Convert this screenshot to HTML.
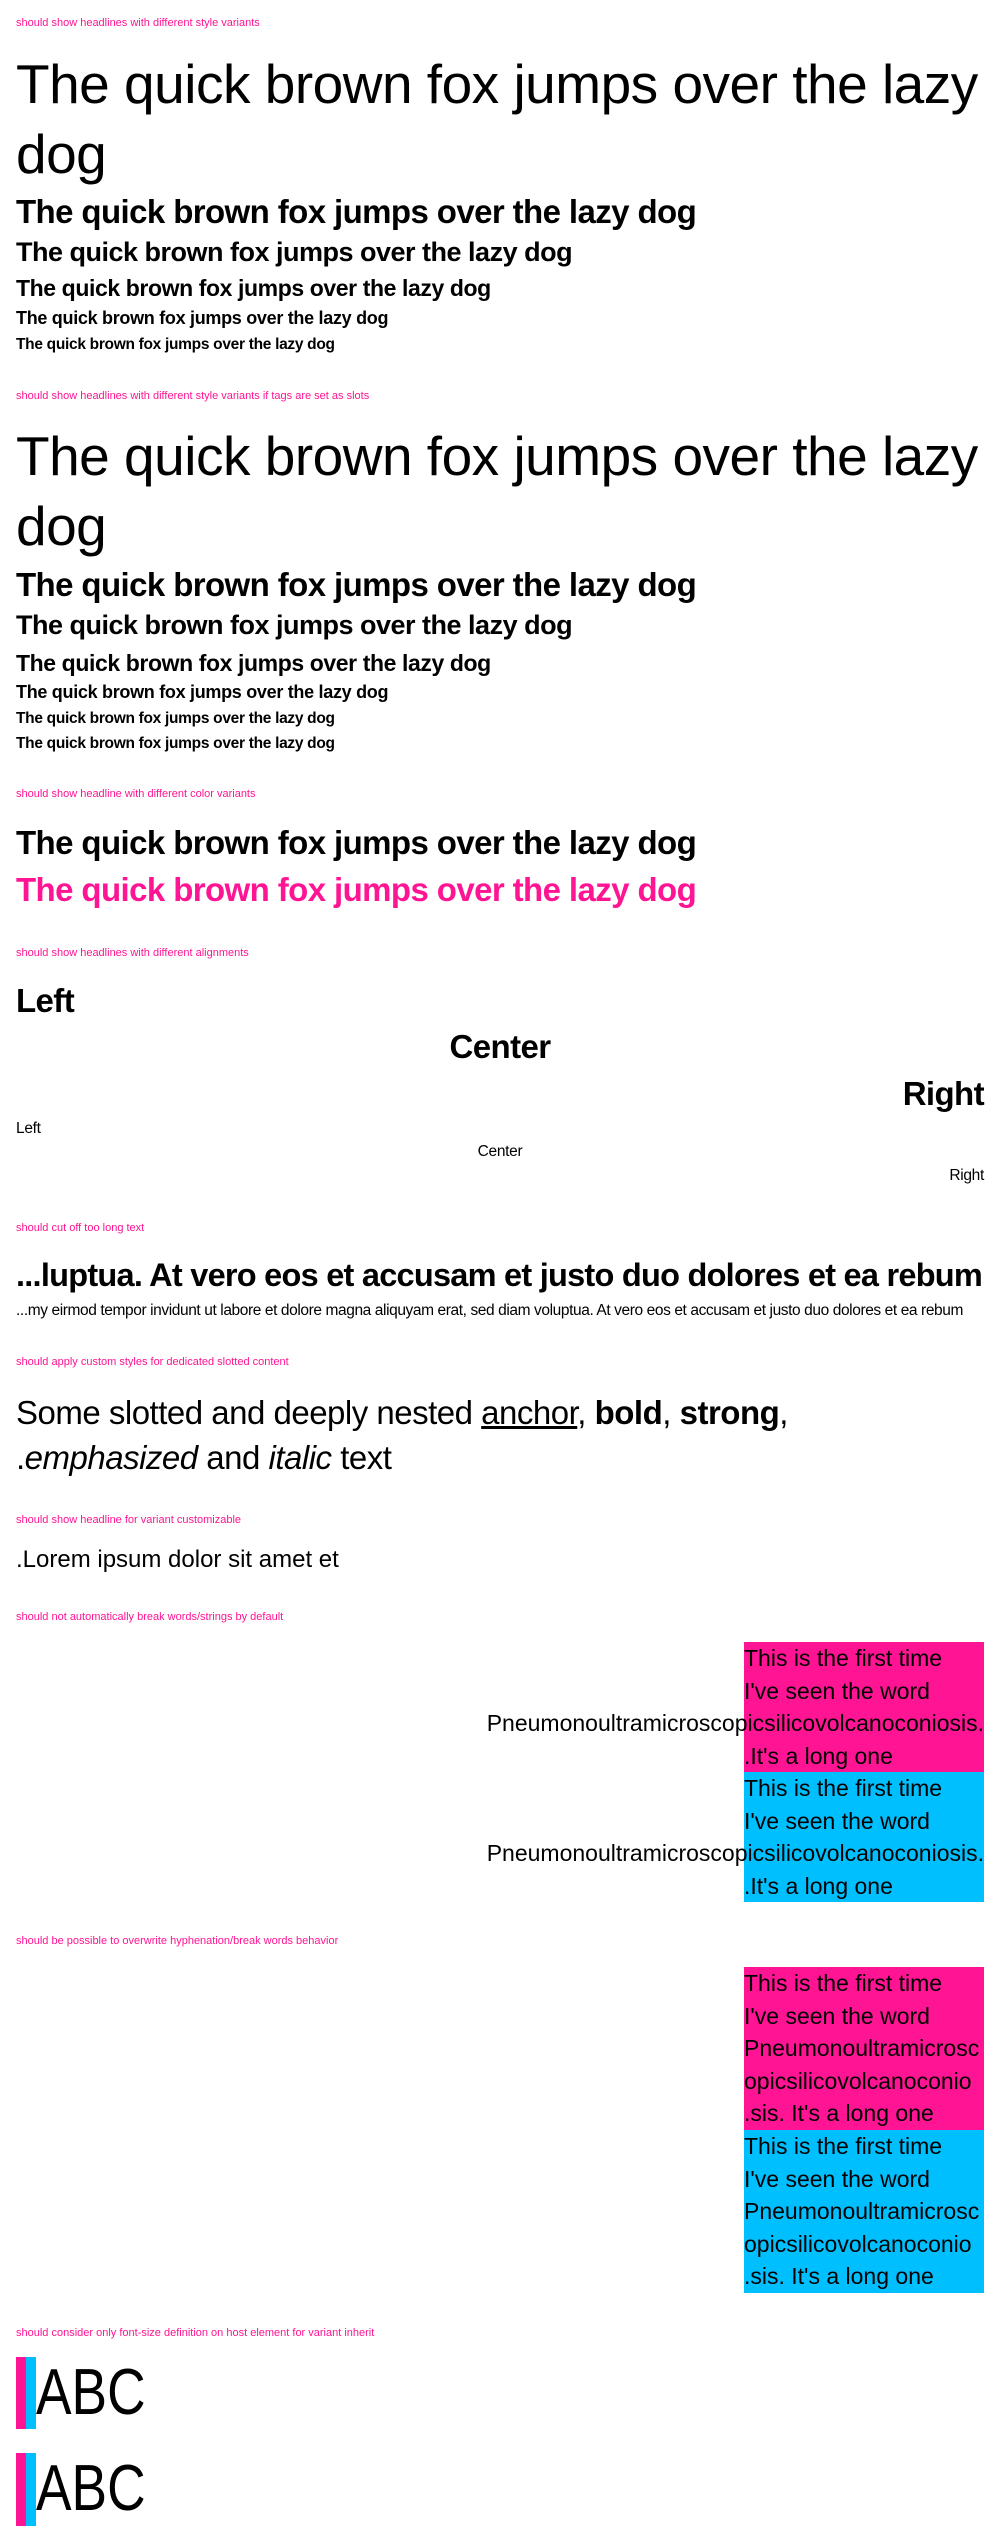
<!DOCTYPE html>
<html><head><meta charset="utf-8"><style>
body{margin:0;width:1000px;height:2541px;position:relative;background:#fff;font-family:"Liberation Sans",Arial,sans-serif;color:#000;overflow:hidden}
.a{position:absolute;left:16px;right:16px;white-space:nowrap}
.l{font-size:11px;line-height:14px;color:#ff1493}
.h1{font-size:55px;line-height:70px;letter-spacing:-0.5px}
.h2{font-size:33px;line-height:40px;font-weight:bold;letter-spacing:-0.6px}
.h3{font-size:27px;line-height:34px;font-weight:bold;letter-spacing:-0.5px}
.h4{font-size:23px;line-height:30px;font-weight:bold;letter-spacing:-0.4px}
.h5{font-size:18px;line-height:24px;font-weight:bold;letter-spacing:-0.3px}
.h6{font-size:15.5px;line-height:20px;font-weight:bold;letter-spacing:-0.3px}
.box{position:absolute;left:744px;width:240px;font-size:23px;line-height:32.5px}
.box div{display:flex;justify-content:flex-end;white-space:nowrap}
.box div.s{justify-content:flex-start}
.pk{background:#ff1493}.bl{background:#00bfff}
.bar{position:absolute;width:10px}
.abc{position:absolute;left:36px;font-size:65px;line-height:72px;transform:scaleX(0.82);transform-origin:left}
</style></head><body>
<div class="a l" style="top:16px">should show headlines with different style variants</div>
<div class="a h1" style="top:49px">The quick brown fox jumps over the lazy<br>dog</div>
<div class="a h2" style="top:192px">The quick brown fox jumps over the lazy dog</div>
<div class="a h3" style="top:235px">The quick brown fox jumps over the lazy dog</div>
<div class="a h4" style="top:273px">The quick brown fox jumps over the lazy dog</div>
<div class="a h5" style="top:306px">The quick brown fox jumps over the lazy dog</div>
<div class="a h6" style="top:335px">The quick brown fox jumps over the lazy dog</div>

<div class="a l" style="top:389px">should show headlines with different style variants if tags are set as slots</div>
<div class="a h1" style="top:421px">The quick brown fox jumps over the lazy<br>dog</div>
<div class="a h2" style="top:565px">The quick brown fox jumps over the lazy dog</div>
<div class="a h3" style="top:608px">The quick brown fox jumps over the lazy dog</div>
<div class="a h4" style="top:648px">The quick brown fox jumps over the lazy dog</div>
<div class="a h5" style="top:680px">The quick brown fox jumps over the lazy dog</div>
<div class="a h6" style="top:709px">The quick brown fox jumps over the lazy dog</div>
<div class="a h6" style="top:734px">The quick brown fox jumps over the lazy dog</div>

<div class="a l" style="top:787px">should show headline with different color variants</div>
<div class="a h2" style="top:823px">The quick brown fox jumps over the lazy dog</div>
<div class="a h2" style="top:870px;color:#ff1493">The quick brown fox jumps over the lazy dog</div>

<div class="a l" style="top:946px">should show headlines with different alignments</div>
<div class="a h2" style="top:981px">Left</div>
<div class="a h2" style="top:1027px;text-align:center">Center</div>
<div class="a h2" style="top:1074px;text-align:right">Right</div>
<div class="a h6" style="top:1119px;font-weight:normal">Left</div>
<div class="a h6" style="top:1142px;text-align:center;font-weight:normal">Center</div>
<div class="a h6" style="top:1166px;text-align:right;font-weight:normal">Right</div>

<div class="a l" style="top:1221px">should cut off too long text</div>
<div class="a h2" style="top:1255px;overflow:hidden;font-size:32.5px;letter-spacing:-0.75px">...luptua. At vero eos et accusam et justo duo dolores et ea rebum</div>
<div class="a h6" style="top:1301px;overflow:hidden;font-weight:normal;letter-spacing:-0.4px">...my eirmod tempor invidunt ut labore et dolore magna aliquyam erat, sed diam voluptua. At vero eos et accusam et justo duo dolores et ea rebum</div>

<div class="a l" style="top:1355px">should apply custom styles for dedicated slotted content</div>
<div class="a" style="top:1390px;font-size:33px;line-height:45px;letter-spacing:-0.5px">Some slotted and deeply nested <u>anchor</u>, <b>bold</b>, <b>strong</b>,<br>.<i>emphasized</i> and <i>italic</i> text</div>

<div class="a l" style="top:1513px">should show headline for variant customizable</div>
<div class="a" style="top:1545px;font-size:24px;line-height:30px">.Lorem ipsum dolor sit amet et</div>

<div class="a l" style="top:1610px">should not automatically break words/strings by default</div>
<div class="box pk" style="top:1642px"><div class="s">This is the first time</div><div class="s">I've seen the word</div><div>Pneumonoultramicroscopicsilicovolcanoconiosis.</div><div class="s">.It's a long one</div></div>
<div class="box bl" style="top:1772px"><div class="s">This is the first time</div><div class="s">I've seen the word</div><div>Pneumonoultramicroscopicsilicovolcanoconiosis.</div><div class="s">.It's a long one</div></div>

<div class="a l" style="top:1934px">should be possible to overwrite hyphenation/break words behavior</div>
<div class="box pk" style="top:1967px"><div class="s">This is the first time</div><div class="s">I've seen the word</div><div class="s">Pneumonoultramicrosc</div><div class="s">opicsilicovolcanoconio</div><div class="s">.sis. It's a long one</div></div>
<div class="box bl" style="top:2130px"><div class="s">This is the first time</div><div class="s">I've seen the word</div><div class="s">Pneumonoultramicrosc</div><div class="s">opicsilicovolcanoconio</div><div class="s">.sis. It's a long one</div></div>

<div class="a l" style="top:2326px">should consider only font-size definition on host element for variant inherit</div>
<div class="bar pk" style="left:16px;top:2357px;height:72px"></div>
<div class="bar bl" style="left:26px;top:2357px;height:72px"></div>
<div class="abc" style="top:2356px">ABC</div>
<div class="bar pk" style="left:16px;top:2453px;height:73px"></div>
<div class="bar bl" style="left:26px;top:2453px;height:73px"></div>
<div class="abc" style="top:2452px">ABC</div>
</body></html>
